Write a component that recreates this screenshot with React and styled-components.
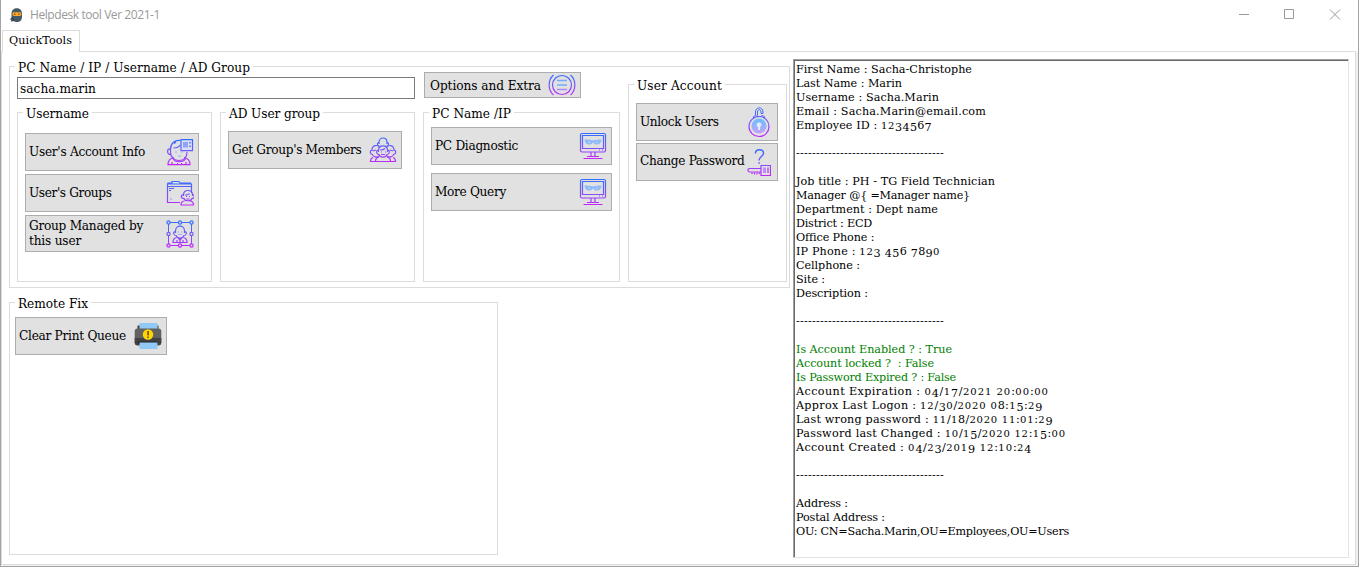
import React, { useLayoutEffect, useRef } from "react";
import styled, { createGlobalStyle, css } from "styled-components";

const SERIF = `"DejaVu Serif Condensed", "DejaVu Serif", "Liberation Serif", serif`;
const WIDE_SERIF = `"DejaVu Serif", "Liberation Serif", serif`;

const GlobalStyle = createGlobalStyle`
  * { box-sizing: border-box; }
  body { margin: 0; background: #fff; overflow: hidden; }
`;

const Window = styled.div`
  width: 1359px;
  height: 567px;
  display: flex;
  flex-direction: column;
  background: #fff;
  border: 1px solid #a5a5a5;
  border-top: 0;
  color: #000;
  font-family: ${SERIF};
  font-size: 13.5px;
`;

const TitleBar = styled.header`
  height: 29px;
  flex: none;
  display: flex;
  align-items: center;
  padding-left: 8px;
`;

const Title = styled.div`
  margin-left: 6px;
  flex: 1;
  color: #999;
  font: 12px/18px "Open Sans", "Noto Sans", sans-serif;
`;

const WindowControls = styled.div`
  display: flex;
  gap: 34px;
  margin-right: 17px;
  svg { display: block; }
`;

const TabStrip = styled.nav`
  height: 22px;
  flex: none;
  display: flex;
  padding: 1px 0 0 1px;
`;

const Tab = styled.div`
  width: 78px;
  height: 22px;
  position: relative;
  padding-left: 6px;
  border: 1px solid #dcdcdc;
  border-bottom: 0;
  background: #fff;
  font-family: ${WIDE_SERIF};
  font-size: 11.2px;
  line-height: 19px;
`;

const TabPage = styled.main`
  flex: 1;
  display: flex;
  gap: 3px;
  padding: 7px 6px 6px 7px;
  margin-right: 2px;
  margin-bottom: 1px;
  border: 1px solid #dcdcdc;
  box-shadow: 2px 1px 0 #f0f0f0;
`;

const Tools = styled.div`
  width: 781px;
  flex: none;
  display: flex;
  flex-direction: column;
  padding-top: 7px;
  gap: 14px;
`;

const Group = styled.section`
  width: ${(p) => p.$w}px;
  height: ${(p) => p.$h}px;
  flex: none;
  border: 1px solid #dcdcdc;
`;

const Legend = styled.div`
  width: fit-content;
  height: 18px;
  margin: -8px 0 0 5px;
  padding: 0 3px;
  background: #fff;
  line-height: 17px;
`;

const GroupBody = styled.div`
  display: flex;
  flex-direction: ${(p) => (p.$row ? "row" : "column")};
  gap: ${(p) => p.$gap || 0}px;
  padding: ${(p) => p.$pad};
`;

const Column = styled.div`
  display: flex;
  flex-direction: column;
  gap: ${(p) => p.$gap || 0}px;
  margin-top: ${(p) => p.$top || 0}px;
`;

const Row = styled.div`
  display: flex;
  gap: 8px;
`;

const NameField = styled.div`
  width: 398px;
  height: 22px;
  padding-left: 2px;
  border: 1px solid #7a7a7a;
  line-height: 20px;
`;

const Button = styled.button`
  width: ${(p) => p.$w}px;
  height: ${(p) => p.$h || 38}px;
  display: flex;
  align-items: center;
  justify-content: space-between;
  margin: 0 0 0 ${(p) => p.$indent || 0}px;
  padding: 0 ${(p) => p.$right ?? 4}px 0 ${(p) => p.$left ?? 3}px;
  border: 1px solid #adadad;
  border-radius: 0;
  background: #e1e1e1;
  color: #000;
  font: 13.5px/15px ${SERIF};
  text-align: left;
  svg { display: block; flex: none; }
`;

const Caption = styled.span`
  display: flex;
  flex-direction: column;
  align-items: flex-start;
  margin-top: ${(p) => p.$shift ?? -2}px;
`;

const Output = styled.div`
  width: 556px;
  height: 499px;
  border: 1px solid;
  border-color: #a0a0a0 #e3e3e3 #e3e3e3 #a0a0a0;
`;

const OutputInner = styled.div`
  height: 100%;
  padding: 2px 0 0 1px;
  border: solid #696969;
  border-width: 1px 0 0 1px;
  font-family: ${WIDE_SERIF};
  font-size: 11.2px;
`;

const Line = styled.div`
  height: 14px;
  line-height: 14px;
  color: ${(p) => (p.$ok ? "#008000" : "#000")};
`;

const FitText = styled.span`
  display: inline-block;
  white-space: pre;
  letter-spacing: var(--track, 0px);
`;

const Digits = styled.span`
  line-height: 0;
  ${(p) =>
    p.$kind === "small"
      ? css`
          font-size: 10px;
          letter-spacing: calc(var(--track, 0px) + 0.6px);
        `
      : css`
          vertical-align: -2px;
          letter-spacing: calc(var(--track, 0px) + 0.2px);
        `}
`;

/* Tracks its text so that it spans the given width. */
function Fit({ w, children, length }) {
  const ref = useRef(null);
  const n = length || String(children).length;
  useLayoutEffect(() => {
    const el = ref.current;
    el.style.setProperty("--track", "0px");
    const value = (w - el.getBoundingClientRect().width) / n;
    el.style.setProperty("--track", value + "px");
  }, [w, n]);
  return <FitText ref={ref}>{children}</FitText>;
}

/* Old-style figures: 0-2 at x-height, 3-5, 7 and 9 below the baseline. */
function OldStyle({ text }) {
  return text.split(/([012]+|[34579]+)/).map((part, i) => {
    if (!part) return null;
    if (/^[012]/.test(part)) return <Digits key={i} $kind="small">{part}</Digits>;
    if (/^[34579]/.test(part)) return <Digits key={i} $kind="low">{part}</Digits>;
    return part;
  });
}

function GroupBox({ title, tw, w, h, pad, gap, row, children }) {
  return (
    <Group $w={w} $h={h}>
      <Legend><Fit w={tw}>{title}</Fit></Legend>
      <GroupBody $pad={pad} $gap={gap} $row={row}>{children}</GroupBody>
    </Group>
  );
}

function ToolButton({ lines, icon, shift, ...rest }) {
  return (
    <Button {...rest}>
      <Caption $shift={shift}>
        {lines.map(([text, w]) => <Fit key={text} w={w}>{text}</Fit>)}
      </Caption>
      {icon}
    </Button>
  );
}

function Glyph({ id, w = 28, h = 28, children }) {
  return (
    <svg width={w} height={h} viewBox={`0 0 ${w} ${h}`} fill="none" stroke={`url(#${id})`} strokeWidth="1.2">
      <defs>
        <linearGradient id={id} gradientUnits="userSpaceOnUse" x1="0" y1="0" x2="0" y2={h}>
          <stop offset="0" stopColor="#2b72ff" />
          <stop offset="0.5" stopColor="#7558f7" />
          <stop offset="1" stopColor="#c822fa" />
        </linearGradient>
      </defs>
      {children}
    </svg>
  );
}

const AccountIcon = () => (
  <Glyph id="account">
    <path d="M14.5 2.500C9 1.500 4.500 5.500 4.500 11v3c0 5 3.500 8.500 8.500 8.500s8-3.500 8-8.500M7.500 10c3 0 5.500-1 6.500-3M4.500 11c-4-1-4 6 .5 5.500M8 5.500l2-1.500" />
    <path d="M15 1.600h11.500v11H15z" fill="#d8e0fa" />
    <path d="M17 4h5v5.500h-5z" fill="#91a4f4" stroke="none" />
    <path d="M24 4v1.500M24 7.500V9" strokeWidth="1.500" />
    <path d="M9 14h2M15 14h2M12 18h3" stroke="#91b0fa" />
    <path d="M8 19.500c-4 .8-6 2.500-6 7.100h22c0-4.500-2-6.300-6-7.100M7 20c1 5 11 5 13 0M6 24v2.500M20 24v2.500M11 25.500h1M15 25.500h1" />
  </Glyph>
);

const FolderUserIcon = () => (
  <Glyph id="folder">
    <path d="M14 23.500H1.500V5h24v9M1.500 7.500h24M2 5V4h4V2.500h7l1 1.500h10.500v1M3 9.500h5M3 11.500h2" />
    <path d="M4 18v3h2.500z" fill="#a8bdfc" stroke="none" />
    <path d="M17.500 17v-1c0-6 9-6 9 0v1M17.500 15.500c-3 0-3 4 .5 4 1 3 7 3 8 0 3 0 3-4 .5-4M19 16c2 0 4-.5 4.500-1.500M20 17.500h1M23 17.500h1M20.500 20h3M18.500 22c-3 .3-3.500 1.700-3.500 4h12.500c0-2.300-.5-3.700-3.500-4" />
  </Glyph>
);

const ManagedIcon = () => (
  <Glyph id="managed">
    <path d="M2.500 2.500h23v23h-23z" strokeWidth="1" />
    <path d="M9.500 13V11c0-6.500 9-6.500 9 0v2M9.500 11.500c-3 0-2 4 .5 4 1.500 3.500 6.500 3.500 8 0 2.500 0 3.500-4 .5-4M10.500 17.500c-3 .7-3.500 2.500-3.500 5h14c0-2.500-.5-4.300-3.500-5M12 18l2 2 2-2M14 20v2.500M11 20v2M17 20v2" />
    <path d="M11.500 12h1.500M15 12h1.500M12 14.500h4" stroke="#9babff" />
    {[[2.5, 2.5], [14, 2.5], [25.5, 2.5], [2.5, 14], [25.5, 14], [2.5, 25.5], [14, 25.5], [25.5, 25.5]].map(([x, y]) => (
      <circle key={`${x}-${y}`} cx={x} cy={y} r="1.600" fill="#e1e1e1" />
    ))}
  </Glyph>
);

const MembersIcon = () => (
  <Glyph id="members">
    <path d="M10 8V6.500c0-6 8-6 8 0V8M9.500 6.500c-2 1-1 3.500 1 3.500M18.500 6.500c2 1 1 3.500-1 3.500" />
    <path d="M3 15v-1c0-5 6-6 8-2M25 15v-1c0-5-6-6-8-2M3 14c-3 1-1.500 4.500.5 4.500C4 21 8 22 10 20M25 14c3 1 1.500 4.500-.5 4.500C24 21 20 22 18 20M4 15l3-1M24 15l-3-1" />
    <path d="M9.500 16v-2c0-5.500 9-5.500 9 0v2M9.500 14c-3 0-2 4.500.5 4.500 1 3.500 7 3.500 8 0 2.500 0 3.500-4.500.5-4.500M11 14c2 0 4-.5 5-1.500" />
    <path d="M12 16h1M16 16h1M12 18.500h4M4 21.500c-2 .5-2.500 1.500-2.500 4h25c0-2.500-.5-3.500-2.500-4M10 21c-3 .5-3.500 2-3.500 4.500M18 21c3 .5 3.500 2 3.500 4.500" />
  </Glyph>
);

const OptionsIcon = () => (
  <Glyph id="options" w={28} h={24}>
    <circle cx="14" cy="12" r="9.500" />
    <path d="M5.500 2C-.3 7-.3 17 5.500 22M22.500 2c5.800 5 5.800 15 0 20" />
    <path d="M9 7.500h10M9 12h10" strokeWidth="1.500" stroke="#72aaff" />
    <path d="M9 16.500h10" strokeWidth="1.500" stroke="#a988ff" />
  </Glyph>
);

const MonitorIcon = ({ id }) => (
  <Glyph id={id}>
    <rect x="1.500" y="1.500" width="25" height="18.500" rx="1.500" />
    <path d="M3.500 3.500h21v13h-21z" />
    <path d="M5.500 7.500c3 0 5.500.2 8.500 1 3-.8 5.500-1 8.500-1-.2 3-2 5-4.800 5-1.500 0-2.700-.8-3.700-2.300-1 1.500-2.200 2.300-3.700 2.300-2.800 0-4.600-2-4.800-5z" fill="#8bb9fb" stroke="none" />
    <path d="M8.500 9.400l3.200.7-1.500.8zM19.500 9.400l-3.200.7 1.500.8z" fill="#d5e0f8" stroke="none" />
    <path d="M20 18h1M23 18h1M12 20v4.500M16 20v4.500M8 24.500h12M4.500 26.500h19" />
  </Glyph>
);

const LockIcon = () => (
  <Glyph id="lock" w={24} h={32}>
    <defs>
      <linearGradient id="lockFill" x1="0" y1="0" x2="0" y2="1">
        <stop offset="0" stopColor="#69c1ff" />
        <stop offset="1" stopColor="#c4a1ff" />
      </linearGradient>
    </defs>
    <circle cx="12" cy="20.500" r="10" />
    <circle cx="12" cy="20" r="7.500" fill="url(#lockFill)" stroke="none" />
    <path d="M8.500 9.500V6c0-5.500 7.500-5.500 7.500 0v1.500h-2V6c0-3-3.500-3-3.500 0v3.500M6.500 12v-1.500l2-1 2 1h3l2-1 2 1V12" strokeWidth="1" />
    <path d="M11 21a2.400 2.400 0 1 1 2 0v3h-2z" fill="#e5e9fa" stroke="none" />
  </Glyph>
);

const PasswordIcon = () => (
  <Glyph id="password" w={24} h={28}>
    <path d="M8.500 5.500C8 .5 16.500.5 16.500 5c0 3.500-4.500 3.500-4.500 7.500M11.300 15h1.500" strokeWidth="1.500" />
    <path d="M14 17.500h9.500v10H14zM14 20.500H3c-3 0-2.500 3.500 0 3.500h11" />
    <path d="M16 19.500h3v5.500h-3z" fill="#bd8cff" stroke="none" />
    <path d="M21 19.500v5.500M5 24.500v1.500M7.500 24.500v2M10 24.500v2M12.300 24.500v1.500" />
  </Glyph>
);

const PrinterIcon = () => (
  <svg width="28" height="28" viewBox="0 0 28 28">
    <path d="M3.500 3.500h21v5h-21z" fill="#424242" />
    <path d="M5.500 1h18v6h-18z" fill="#90caf9" />
    <rect x=".7" y="6.500" width="26.600" height="16.500" rx="3" fill="#616161" />
    <path d="M.7 16h26.600v4.500a3 3 0 0 1-3 3H3.700a3 3 0 0 1-3-3z" fill="#424242" />
    <path d="M4 19.500h20V22H4z" fill="#242424" />
    <path d="M5.500 20.500h18V27h-18z" fill="#90caf9" />
    <circle cx="14" cy="12.500" r="5.200" fill="#ffd600" />
    <path d="M13.200 9h1.800v4.500h-1.800zM13.200 14.500h1.800v1.600h-1.800z" fill="#8a5700" />
  </svg>
);

const NinjaIcon = () => (
  <svg width="15" height="16" viewBox="0 0 15 16">
    <path d="M2.500 9V6.500C2.500-.5 13-.5 13 6.500V10c0 3-2 5-5.200 5S2.500 12.500 2.500 9z" fill="#455a64" />
    <path d="M3.500 9.500L.8 12.500l1.700.2-.7 1.800 4-.5z" fill="#37474f" />
    <rect x="3.500" y="5.200" width="8.800" height="3.800" rx="1.400" fill="#ffa726" />
    <path d="M5.300 6.500h1.200v1.200H5.300zM9.300 6.500h1.200v1.200H9.300z" fill="#5a3924" />
  </svg>
);

const DASHES = ["-".repeat(37), 148];

const REPORT = [
  ["First Name : Sacha-Christophe", 176],
  ["Last Name : Marin", 106],
  ["Username : Sacha.Marin", 143],
  ["Email : Sacha.Marin@email.com", 190],
  ["Employee ID : 1234567", 136],
  null,
  DASHES,
  null,
  ["Job title : PH - TG Field Technician", 199],
  ["Manager @{ =Manager name}", 174],
  ["Department : Dept name", 142],
  ["District : ECD", 76],
  ["Office Phone :", 78],
  ["IP Phone : 123 456 7890", 144],
  ["Cellphone :", 64],
  ["Site :", 29],
  ["Description :", 72],
  null,
  DASHES,
  null,
  ["Is Account Enabled ? : True", 156, true],
  ["Account locked ?  : False", 138, true],
  ["Is Password Expired ? : False", 160, true],
  ["Account Expiration : 04/17/2021 20:00:00", 253],
  ["Approx Last Logon : 12/30/2020 08:15:29", 247],
  ["Last wrong password : 11/18/2020 11:01:29", 257],
  ["Password last Changed : 10/15/2020 12:15:00", 270],
  ["Account Created : 04/23/2019 12:10:24", 236],
  null,
  DASHES,
  null,
  ["Address :", 52],
  ["Postal Address :", 89],
  ["OU: CN=Sacha.Marin,OU=Employees,OU=Users", 273],
];

export default function App() {
  return (
    <Window>
      <GlobalStyle />
      <TitleBar>
        <NinjaIcon />
        <Title><Fit w={130}>Helpdesk tool Ver 2021-1</Fit></Title>
        <WindowControls>
          <svg width="11" height="11" stroke="#999"><path d="M0 5.500h10" /></svg>
          <svg width="11" height="11" stroke="#999" fill="none"><path d="M.5.5h9v9H.5z" /></svg>
          <svg width="12" height="11" stroke="#999"><path d="M1 .5l10 10M11 .5l-10 10" /></svg>
        </WindowControls>
      </TitleBar>
      <TabStrip>
        <Tab><Fit w={63}>QuickTools</Fit></Tab>
      </TabStrip>
      <TabPage>
        <Tools>
          <GroupBox title="PC Name / IP / Username / AD Group" tw={232} w={781} h={222} pad="0 0 0 7px" gap={8} row>
            <Column $gap={13}>
              <NameField><Fit w={76}>sacha.marin</Fit></NameField>
              <Row>
                <GroupBox title="Username" tw={63} w={195} h={170} pad="10px 0 0 7px" gap={3}>
                  <ToolButton $w={174} lines={[["User's Account Info", 116]]} icon={<AccountIcon />} />
                  <ToolButton $w={174} lines={[["User's Groups", 82.5]]} icon={<FolderUserIcon />} />
                  <ToolButton $w={174} $h={37} lines={[["Group Managed by", 114], ["this user", 52]]} icon={<ManagedIcon />} />
                </GroupBox>
                <GroupBox title="AD User group" tw={91} w={195} h={170} pad="8px 0 0 7px">
                  <ToolButton $w={174} lines={[["Get Group's Members", 129.5]]} icon={<MembersIcon />} />
                </GroupBox>
              </Row>
            </Column>
            <Column $top={-5} $gap={14}>
              <ToolButton $w={157} $h={26} $indent={1} $left={5} shift={0} lines={[["Options and Extra", 111]]} icon={<OptionsIcon />} />
              <GroupBox title="PC Name /IP" tw={79} w={197} h={170} pad="4px 0 0 7px" gap={8}>
                <ToolButton $w={181} lines={[["PC Diagnostic", 83]]} icon={<MonitorIcon id="diagnostic" />} />
                <ToolButton $w={181} lines={[["More Query", 71]]} icon={<MonitorIcon id="query" />} />
              </GroupBox>
            </Column>
            <Column $top={7}>
              <GroupBox title="User Account" tw={85} w={159} h={198} pad="8px 0 0 7px" gap={2}>
                <ToolButton $w={142} $right={6} lines={[["Unlock Users", 78.5]]} icon={<LockIcon />} />
                <ToolButton $w={142} $right={6} shift={-4} lines={[["Change Password", 104.5]]} icon={<PasswordIcon />} />
              </GroupBox>
            </Column>
          </GroupBox>
          <GroupBox title="Remote Fix" tw={70} w={489} h={253} pad="4px 0 0 5px">
            <ToolButton $w={152} lines={[["Clear Print Queue", 107]]} icon={<PrinterIcon />} />
          </GroupBox>
        </Tools>
        <Output>
          <OutputInner>
            {REPORT.map((row, i) => (
              <Line key={i} $ok={row && row[2]}>
                {row && <Fit w={row[1]} length={row[0].length}><OldStyle text={row[0]} /></Fit>}
              </Line>
            ))}
          </OutputInner>
        </Output>
      </TabPage>
    </Window>
  );
}
